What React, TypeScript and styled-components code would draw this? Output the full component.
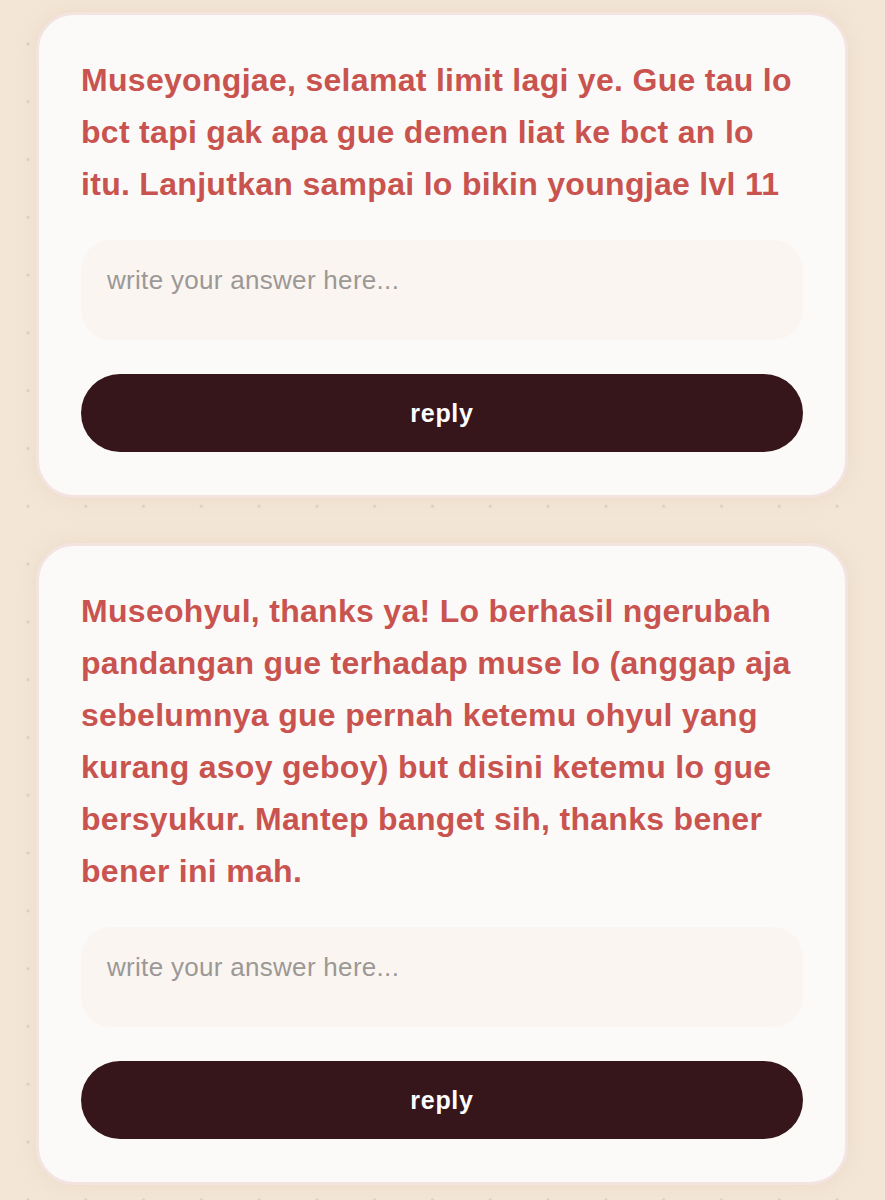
import React from "react";
import styled, { createGlobalStyle } from "styled-components";

const Global = createGlobalStyle`
  html, body { margin: 0; padding: 0; }
  body {
    background-color: #f3e6d6;
    background-image: radial-gradient(circle, rgba(205, 185, 175, 0.55) 1.3px, transparent 1.8px);
    background-size: 57.8px 57.8px;
    background-position: -1px 15px;
    font-family: "Liberation Sans", Arial, sans-serif;
  }
`;

const Page = styled.main`
  display: flex;
  flex-direction: column;
  gap: 45px;
  padding: 12px 37px 30px 36px;
`;

const Card = styled.section`
  display: flex;
  flex-direction: column;
  background: #fcfaf8;
  border: 3px solid #f4e4e1;
  border-radius: 38px;
  padding: 39px 42px 43px 42px;
  box-shadow: 0 0 18px rgba(220, 195, 170, 0.35);
`;

const Message = styled.p`
  margin: 0 0 30px 0;
  color: #c9534f;
  font-weight: 700;
  font-size: 32px;
  line-height: 52px;
  letter-spacing: 0.3px;
`;

const Answer = styled.textarea`
  box-sizing: border-box;
  width: 100%;
  height: 100px;
  border: none;
  outline: none;
  resize: none;
  background: #faf5f1;
  border-radius: 30px;
  padding: 25px 26px;
  font-family: "Liberation Sans", Arial, sans-serif;
  font-size: 26px;
  line-height: 30px;
  letter-spacing: 0.3px;
  color: #444;
  &::placeholder { color: #9c9896; }
`;

const ReplyButton = styled.button`
  margin-top: 34px;
  height: 78px;
  width: 100%;
  border: none;
  border-radius: 39px;
  background: #37161b;
  color: #ffffff;
  font-family: "Liberation Sans", Arial, sans-serif;
  font-weight: 700;
  font-size: 25px;
  letter-spacing: 0.7px;
  cursor: pointer;
`;

const items = [
  "Museyongjae, selamat limit lagi ye. Gue tau lo bct tapi gak apa gue demen liat ke bct an lo itu. Lanjutkan sampai lo bikin youngjae lvl 11",
  "Museohyul, thanks ya! Lo berhasil ngerubah pandangan gue terhadap muse lo (anggap aja sebelumnya gue pernah ketemu ohyul yang kurang asoy geboy) but disini ketemu lo gue bersyukur. Mantep banget sih, thanks bener bener ini mah.",
];

export default function App() {
  return (
    <>
      <Global />
      <Page>
        {items.map((t, i) => (
          <Card key={i}>
            <Message>{t}</Message>
            <Answer placeholder="write your answer here..." />
            <ReplyButton>reply</ReplyButton>
          </Card>
        ))}
      </Page>
    </>
  );
}
